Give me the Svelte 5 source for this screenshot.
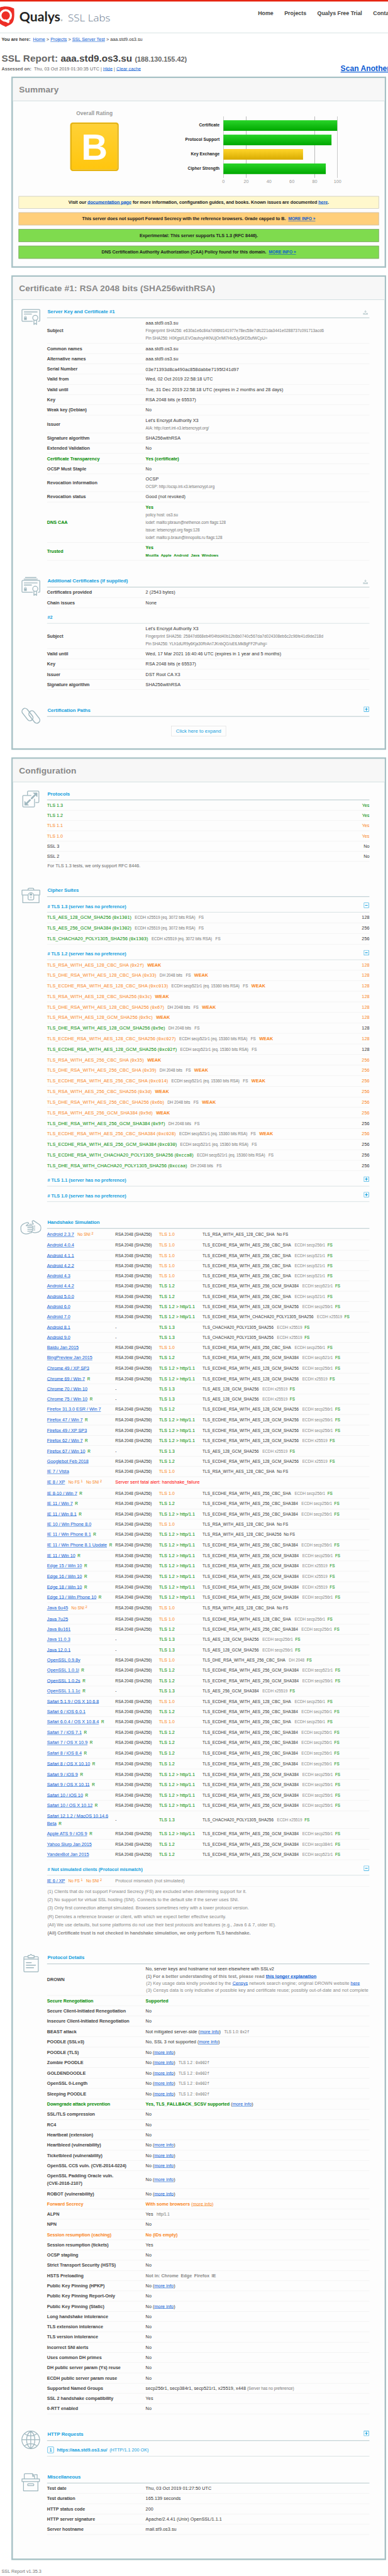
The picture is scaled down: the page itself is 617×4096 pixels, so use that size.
<script>
  const MI = ['more info', 'a'];
  const more = (pre) => [[pre + ' ('], MI, [')']];
  const moreTls = [['No ('], MI, [')'], ['TLS 1.2 : ', 's g'], ['0x002f', 's m']];

  const bars = [
    { label: 'Certificate', value: 100, tone: 'green' },
    { label: 'Protocol Support', value: 95, tone: 'green' },
    { label: 'Key Exchange', value: 70, tone: 'yellow' },
    { label: 'Cipher Strength', value: 90, tone: 'green' }
  ];
  const ticks = [0, 20, 40, 60, 80, 100];

  const cert1 = [
    ['Subject', [[['aaa.std9.os3.su']], [['Fingerprint SHA256: e630a1e6c84a7d96fd141977e78ec58e7dfc221da3441e0288737c091713acd6', 's hash']], [['Pin SHA256: H0Kgsi/LEVOauhcyHKNUjOr/Ml7Hlo5JySKD5ufWCpU=', 's']]]],
    ['Common names', [[['aaa.std9.os3.su']]]],
    ['Alternative names', [[['aaa.std9.os3.su']]]],
    ['Serial Number', [[['03e71393d8ca490ac858dabbe7195f241d97', 'serial']]]],
    ['Valid from', [[['Wed, 02 Oct 2019 22:58:18 UTC']]]],
    ['Valid until', [[['Tue, 31 Dec 2019 22:58:18 UTC (expires in 2 months and 28 days)']]]],
    ['Key', [[['RSA 2048 bits (e 65537)']]]],
    ['Weak key (Debian)', [[['No']]]],
    ['Issuer', [[["Let's Encrypt Authority X3"]], [['AIA: http://cert.int-x3.letsencrypt.org/', 's']]]],
    ['Signature algorithm', [[['SHA256withRSA']]]],
    ['Extended Validation', [[['No']]]],
    ['Certificate Transparency', [[['Yes (certificate)', 'b']]], 'ok'],
    ['OCSP Must Staple', [[['No']]]],
    ['Revocation information', [[['OCSP']], [['OCSP: http://ocsp.int-x3.letsencrypt.org', 's']]]],
    ['Revocation status', [[['Good (not revoked)']]]],
    ['DNS CAA', [[['Yes', 'b']], [['policy host: os3.su', 's']], [['iodef: mailto:pbraun@nethence.com flags:128', 's']], [['issue: letsencrypt.org flags:128', 's']], [['iodef: mailto:p.braun@innopolis.ru flags:128', 's']]], 'ok'],
    ['Trusted', [[['Yes', 'b']], [['Mozilla', 'tb'], ['Apple', 'tb'], ['Android', 'tb'], ['Java', 'tb'], ['Windows', 'tb']]], 'ok']
  ];
  const certExtra = [
    ['Certificates provided', [[['2 (2543 bytes)']]]],
    ['Chain issues', [[['None']]]]
  ];
  const cert2 = [
    ['Subject', [[["Let's Encrypt Authority X3"]], [['Fingerprint SHA256: 25847d668eb4f04fdd40b12b6b0740c567da7d024308eb6c2c96fe41d9de218d', 's hash']], [['Pin SHA256: YLh1dUR9y6Kja30RrAn7JKnbQG/uEtLMkBgFF2Fuihg=', 's']]]],
    ['Valid until', [[['Wed, 17 Mar 2021 16:40:46 UTC (expires in 1 year and 5 months)']]]],
    ['Key', [[['RSA 2048 bits (e 65537)']]]],
    ['Issuer', [[['DST Root CA X3']]]],
    ['Signature algorithm', [[['SHA256withRSA']]]]
  ];

  const protocols = [
    ['TLS 1.3', 'Yes', 'ok'], ['TLS 1.2', 'Yes', 'ok'], ['TLS 1.1', 'Yes', 'warn'],
    ['TLS 1.0', 'Yes', 'warn'], ['SSL 3', 'No', ''], ['SSL 2', 'No', '']
  ];

  const X = 'ECDH x25519 (eq. 3072 bits RSA)';
  const E = 'ECDH secp521r1 (eq. 15360 bits RSA)';
  const D = 'DH 2048 bits';
  const tls13 = [
    ['TLS_AES_128_GCM_SHA256', '0x1301', X, 0, 128],
    ['TLS_AES_256_GCM_SHA384', '0x1302', X, 0, 256],
    ['TLS_CHACHA20_POLY1305_SHA256', '0x1303', X, 0, 256]
  ];
  const tls12 = [
    ['TLS_RSA_WITH_AES_128_CBC_SHA', '0x2f', '', 1, 128],
    ['TLS_DHE_RSA_WITH_AES_128_CBC_SHA', '0x33', D, 1, 128],
    ['TLS_ECDHE_RSA_WITH_AES_128_CBC_SHA', '0xc013', E, 1, 128],
    ['TLS_RSA_WITH_AES_128_CBC_SHA256', '0x3c', '', 1, 128],
    ['TLS_DHE_RSA_WITH_AES_128_CBC_SHA256', '0x67', D, 1, 128],
    ['TLS_RSA_WITH_AES_128_GCM_SHA256', '0x9c', '', 1, 128],
    ['TLS_DHE_RSA_WITH_AES_128_GCM_SHA256', '0x9e', D, 0, 128],
    ['TLS_ECDHE_RSA_WITH_AES_128_CBC_SHA256', '0xc027', E, 1, 128],
    ['TLS_ECDHE_RSA_WITH_AES_128_GCM_SHA256', '0xc02f', E, 0, 128],
    ['TLS_RSA_WITH_AES_256_CBC_SHA', '0x35', '', 1, 256],
    ['TLS_DHE_RSA_WITH_AES_256_CBC_SHA', '0x39', D, 1, 256],
    ['TLS_ECDHE_RSA_WITH_AES_256_CBC_SHA', '0xc014', E, 1, 256],
    ['TLS_RSA_WITH_AES_256_CBC_SHA256', '0x3d', '', 1, 256],
    ['TLS_DHE_RSA_WITH_AES_256_CBC_SHA256', '0x6b', D, 1, 256],
    ['TLS_RSA_WITH_AES_256_GCM_SHA384', '0x9d', '', 1, 256],
    ['TLS_DHE_RSA_WITH_AES_256_GCM_SHA384', '0x9f', D, 0, 256],
    ['TLS_ECDHE_RSA_WITH_AES_256_CBC_SHA384', '0xc028', E, 1, 256],
    ['TLS_ECDHE_RSA_WITH_AES_256_GCM_SHA384', '0xc030', E, 0, 256],
    ['TLS_ECDHE_RSA_WITH_CHACHA20_POLY1305_SHA256', '0xcca8', E, 0, 256],
    ['TLS_DHE_RSA_WITH_CHACHA20_POLY1305_SHA256', '0xccaa', D, 0, 256]
  ];

  // name | flags | protocol | suite | key exchange
  // flags: R = reference browser, N = no SNI, F = no FS, X = handshake failure
  const EC = 'TLS_ECDHE_RSA_WITH_AES_';
  const sims = `Android 2.3.7|N|1.0|TLS_RSA_WITH_AES_128_CBC_SHA|
Android 4.0.4||1.0|@256_CBC_SHA|ECDH secp256r1
Android 4.1.1||1.0|@256_CBC_SHA|ECDH secp521r1
Android 4.2.2||1.0|@256_CBC_SHA|ECDH secp521r1
Android 4.3||1.0|@256_CBC_SHA|ECDH secp521r1
Android 4.4.2||1.2|@256_GCM_SHA384|ECDH secp521r1
Android 5.0.0||1.2|@256_CBC_SHA|ECDH secp521r1
Android 6.0||1.2h|@128_GCM_SHA256|ECDH secp256r1
Android 7.0||1.2h|TLS_ECDHE_RSA_WITH_CHACHA20_POLY1305_SHA256|ECDH x25519
Android 8.1||1.3|TLS_CHACHA20_POLY1305_SHA256|ECDH x25519
Android 9.0||1.3|TLS_CHACHA20_POLY1305_SHA256|ECDH x25519
Baidu Jan 2015||1.0|@256_CBC_SHA|ECDH secp256r1
BingPreview Jan 2015||1.2|@256_GCM_SHA384|ECDH secp521r1
Chrome 49 / XP SP3||1.2h|@128_GCM_SHA256|ECDH secp256r1
Chrome 69 / Win 7|R|1.2h|@128_GCM_SHA256|ECDH x25519
Chrome 70 / Win 10||1.3|TLS_AES_128_GCM_SHA256|ECDH x25519
Chrome 75 / Win 10|R|1.3|TLS_AES_128_GCM_SHA256|ECDH x25519
Firefox 31.3.0 ESR / Win 7||1.2|@128_GCM_SHA256|ECDH secp256r1
Firefox 47 / Win 7|R|1.2h|@128_GCM_SHA256|ECDH secp256r1
Firefox 49 / XP SP3||1.2h|@128_GCM_SHA256|ECDH secp256r1
Firefox 62 / Win 7|R|1.2h|@128_GCM_SHA256|ECDH x25519
Firefox 67 / Win 10|R|1.3|TLS_AES_128_GCM_SHA256|ECDH x25519
Googlebot Feb 2018||1.2|@128_GCM_SHA256|ECDH x25519
IE 7 / Vista||1.0|TLS_RSA_WITH_AES_128_CBC_SHA|
IE 8 / XP|FNX|||
IE 8-10 / Win 7|R|1.0|@256_CBC_SHA|ECDH secp256r1
IE 11 / Win 7|R|1.2|@256_CBC_SHA384|ECDH secp256r1
IE 11 / Win 8.1|R|1.2h|@256_CBC_SHA384|ECDH secp256r1
IE 10 / Win Phone 8.0||1.0|TLS_RSA_WITH_AES_128_CBC_SHA|
IE 11 / Win Phone 8.1|R|1.2h|TLS_RSA_WITH_AES_128_CBC_SHA256|
IE 11 / Win Phone 8.1 Update|R|1.2h|@256_CBC_SHA384|ECDH secp256r1
IE 11 / Win 10|R|1.2h|@256_GCM_SHA384|ECDH secp256r1
Edge 15 / Win 10|R|1.2h|@256_GCM_SHA384|ECDH x25519
Edge 16 / Win 10|R|1.2h|@256_GCM_SHA384|ECDH x25519
Edge 18 / Win 10|R|1.2h|@256_GCM_SHA384|ECDH x25519
Edge 13 / Win Phone 10|R|1.2h|@256_GCM_SHA384|ECDH secp256r1
Java 6u45|N|1.0|TLS_RSA_WITH_AES_128_CBC_SHA|
Java 7u25||1.0|@128_CBC_SHA|ECDH secp256r1
Java 8u161||1.2|@256_CBC_SHA384|ECDH secp256r1
Java 11.0.3||1.3|TLS_AES_128_GCM_SHA256|ECDH secp256r1
Java 12.0.1||1.3|TLS_AES_128_GCM_SHA256|ECDH secp256r1
OpenSSL 0.9.8y||1.0|TLS_DHE_RSA_WITH_AES_256_CBC_SHA|DH 2048
OpenSSL 1.0.1l|R|1.2|@256_GCM_SHA384|ECDH secp521r1
OpenSSL 1.0.2s|R|1.2|@256_GCM_SHA384|ECDH secp256r1
OpenSSL 1.1.1c|R|1.3|TLS_AES_256_GCM_SHA384|ECDH x25519
Safari 5.1.9 / OS X 10.6.8||1.0|@128_CBC_SHA|ECDH secp256r1
Safari 6 / iOS 6.0.1||1.2|@256_CBC_SHA384|ECDH secp256r1
Safari 6.0.4 / OS X 10.8.4|R|1.0|@256_CBC_SHA|ECDH secp256r1
Safari 7 / iOS 7.1|R|1.2|@256_CBC_SHA384|ECDH secp256r1
Safari 7 / OS X 10.9|R|1.2|@256_CBC_SHA384|ECDH secp256r1
Safari 8 / iOS 8.4|R|1.2|@256_CBC_SHA384|ECDH secp256r1
Safari 8 / OS X 10.10|R|1.2|@256_CBC_SHA384|ECDH secp256r1
Safari 9 / iOS 9|R|1.2h|@256_GCM_SHA384|ECDH secp256r1
Safari 9 / OS X 10.11|R|1.2h|@256_GCM_SHA384|ECDH secp256r1
Safari 10 / iOS 10|R|1.2h|@256_GCM_SHA384|ECDH secp256r1
Safari 10 / OS X 10.12|R|1.2h|@256_GCM_SHA384|ECDH secp256r1
Safari 12.1.2 / MacOS 10.14.6 Beta|RL|1.3|TLS_CHACHA20_POLY1305_SHA256|ECDH x25519
Apple ATS 9 / iOS 9|R|1.2h|@256_GCM_SHA384|ECDH secp256r1
Yahoo Slurp Jan 2015||1.2|@256_GCM_SHA384|ECDH secp384r1
YandexBot Jan 2015||1.2|@256_GCM_SHA384|ECDH secp521r1`.split('\n').map((l) => {
    const [name, flags, p, suite, kx] = l.split('|');
    const v = p.slice(0, 3);
    return {
      name, flags, kx,
      proto: 'TLS ' + v + (p.endsWith('h') ? ' > http/1.1' : ''),
      tone: v === '1.0' ? 'warn' : 'ok',
      cert: v === '1.3' ? '-' : 'RSA 2048 (SHA256)',
      suite: suite.replace('@', EC),
      size: flags.includes('L') ? 'double' : flags.includes('N') ? 'sup' : flags.includes('R') ? 'ref' : ''
    };
  });

  const notes = [
    '(1) Clients that do not support Forward Secrecy (FS) are excluded when determining support for it.',
    '(2) No support for virtual SSL hosting (SNI). Connects to the default site if the server uses SNI.',
    '(3) Only first connection attempt simulated. Browsers sometimes retry with a lower protocol version.',
    '(R) Denotes a reference browser or client, with which we expect better effective security.',
    '(All) We use defaults, but some platforms do not use their best protocols and features (e.g., Java 6 & 7, older IE).'
  ];

  const details = [
    ['Secure Renegotiation', [[['Supported', 'b']]], 'ok'],
    ['Secure Client-Initiated Renegotiation', [[['No']]]],
    ['Insecure Client-Initiated Renegotiation', [[['No']]]],
    ['BEAST attack', [[['Not mitigated server-side ('], MI, [')'], ['TLS 1.0: ', 's g'], ['0x2f', 's m']]], 'mono-row'],
    ['POODLE (SSLv3)', [more('No, SSL 3 not supported')]],
    ['POODLE (TLS)', [more('No')]],
    ['Zombie POODLE', [moreTls], 'mono-row'],
    ['GOLDENDOODLE', [moreTls], 'mono-row'],
    ['OpenSSL 0-Length', [moreTls], 'mono-row'],
    ['Sleeping POODLE', [moreTls], 'mono-row'],
    ['Downgrade attack prevention', [[['Yes, TLS_FALLBACK_SCSV supported', 'b'], [' (', 'd'], MI, [')', 'd']]], 'ok'],
    ['SSL/TLS compression', [[['No']]]],
    ['RC4', [[['No']]]],
    ['Heartbeat (extension)', [[['No']]]],
    ['Heartbleed (vulnerability)', [more('No')]],
    ['Ticketbleed (vulnerability)', [more('No')]],
    ['OpenSSL CCS vuln. (CVE-2014-0224)', [more('No')]],
    ['OpenSSL Padding Oracle vuln.\n(CVE-2016-2107)', [more('No')]],
    ['ROBOT (vulnerability)', [more('No')]],
    ['Forward Secrecy', [[['With some browsers', 'b'], [' ('], ['more info', 'a wa'], [')']]], 'warn'],
    ['ALPN', [[['Yes'], ['http/1.1', 's g']]]],
    ['NPN', [[['No']]]],
    ['Session resumption (caching)', [[['No (IDs empty)', 'b']]], 'warn'],
    ['Session resumption (tickets)', [[['Yes']]]],
    ['OCSP stapling', [[['No']]]],
    ['Strict Transport Security (HSTS)', [[['No']]]],
    ['HSTS Preloading', [[['Not in: Chrome', 'gb'], ['Edge', 'gb gap'], ['Firefox', 'gb gap'], ['IE', 'gb gap']]]],
    ['Public Key Pinning (HPKP)', [more('No')]],
    ['Public Key Pinning Report-Only', [[['No']]]],
    ['Public Key Pinning (Static)', [more('No')]],
    ['Long handshake intolerance', [[['No']]]],
    ['TLS extension intolerance', [[['No']]]],
    ['TLS version intolerance', [[['No']]]],
    ['Incorrect SNI alerts', [[['No']]]],
    ['Uses common DH primes', [[['No']]]],
    ['DH public server param (Ys) reuse', [[['No']]]],
    ['ECDH public server param reuse', [[['No']]]],
    ['Supported Named Groups', [[['secp256r1, secp384r1, secp521r1, x25519, x448 '], ['(Server has no preference)', 's']]], 'mono-row'],
    ['SSL 2 handshake compatibility', [[['Yes']]]],
    ['0-RTT enabled', [[['No']]]]
  ];
  const misc = [
    ['Test date', [[['Thu, 03 Oct 2019 01:27:50 UTC']]]],
    ['Test duration', [[['165.139 seconds']]]],
    ['HTTP status code', [[['200']]]],
    ['HTTP server signature', [[['Apache/2.4.41 (Unix) OpenSSL/1.1.1']]]],
    ['Server hostname', [[['mail.st9.os3.su']]]]
  ];
</script>

{#snippet fields(rows)}
  {#each rows as [label, lines, tone = '']}
    <div class="row kv {tone}" class:open={label === 'Serial Number'}>
      <div class="label">{label}</div>
      <div class="value">
        {#each lines as line}<div class="line">{#each line as [text, cls = '']}<span class={cls}>{text}</span>{/each}</div>{/each}
      </div>
    </div>
  {/each}
{/snippet}

{#snippet toggle(open)}
  <svg class="toggle" width="14" height="14" viewBox="0 0 14 14" fill="none" stroke="#12a0de">
    <rect x=".6" y=".6" width="12.8" height="12.8" stroke-width="1.2" />
    <path d={open ? 'M3.5 7h7' : 'M3.5 7h7M7 3v8'} stroke-width="1.8" />
  </svg>
{/snippet}

{#snippet download()}
  <svg class="download" width="13" height="12" viewBox="0 0 13 12" fill="#c3d2d5">
    <path d="M5.4 0h2.2v3.4h2.6L6.500 7 2.800 3.400h2.600z" /><path d="M0 7.500h3.800L6.500 9.300l2.700-1.800H13V12H0z" />
  </svg>
{/snippet}

{#snippet head(title, kind)}
  <div class="head">
    <h3>{title}</h3>
    {#if kind === 'download'}{@render download()}{:else if kind === 'plus'}{@render toggle(false)}{/if}
  </div>
{/snippet}

{#snippet sub(title, kind)}
  <div class="sub">
    <h4>{title}</h4>
    {#if kind}{@render toggle(kind === 'minus')}{/if}
  </div>
{/snippet}

{#snippet suites(rows)}
  {#each rows as [name, code, kx, weak, bits]}
    <div class="row suite">
      <div class={weak ? 'warn' : 'ok'}><span class="cs">{name}</span> (<span class="mono">{code}</span>){#if kx}<span class="s g">{kx}</span><span class="s g">FS</span>{/if}{#if weak}<b class="g">WEAK</b>{/if}</div>
      <div class={weak ? 'warn' : ''}>{bits}</div>
    </div>
  {/each}
{/snippet}

{#snippet icon(name)}
  <svg class="icon" width="56" height="50" viewBox="0 0 56 50" fill="none" stroke="#9fb7bf" stroke-width="2.1" stroke-linecap="round" stroke-linejoin="round">
    {#if name === 'cert' || name === 'certs'}
      {#if name === 'certs'}<path d="M14 1.700h28M10.500 6h35" stroke-width="2.400" />{/if}
      <g transform={name === 'certs' ? 'translate(0 4.500)' : 'translate(0 0)'}>
        <path d="M33 36H7a2 2 0 0 1-2-2V7a2 2 0 0 1 2-2h43a2 2 0 0 1 2 2v27a2 2 0 0 1-2 2h-2" />
        <path d="M11 11.500h34M11 17h19" stroke-width="2.300" />
        <circle cx="40" cy="27" r="6.700" />
        <path d="M36.500 33.500V44.500l3.500-3 3.500 3V33.500" />
        <rect x="10.500" y="26" width="7" height="6.500" fill="#9fb7bf" stroke="none" />
        <path d="M12 26v-1.500a2 2 0 0 1 4 0V26" stroke-width="1.500" />
      </g>
    {:else if name === 'chain'}
      <rect x="11.500" y="3.500" width="16" height="37" rx="8" transform="rotate(-38 19.500 22)" stroke-width="2.500" />
      <rect x="29.500" y="10" width="16" height="37" rx="8" transform="rotate(-38 37.500 28.500)" stroke-width="2.500" />
    {:else if name === 'protocols'}
      <path d="M19.500 14V6a2 2 0 0 1 2-2h26a2 2 0 0 1 2 2v26a2 2 0 0 1-2 2H41" />
      <path d="M29 15.500H9a2 2 0 0 0-2 2v26a2 2 0 0 0 2 2h27a2 2 0 0 0 2-2V25" />
      <path d="M30.500 23l8-8M26 27.500l-8 8" stroke-width="4.500" />
      <path d="M35 8.500h10v10zM12 31v10h10z" fill="#9fb7bf" stroke-width="1" />
    {:else if name === 'case'}
      <path d="M21 9V7.500A2.500 2.500 0 0 1 23.500 5h10A2.500 2.500 0 0 1 36 7.500V9M20 23H6a1 1 0 0 1-1-1V11a1 1 0 0 1 1-1h45a1 1 0 0 1 1 1v11a1 1 0 0 1-1 1H36" />
      <path d="M7 24v19h43V24" />
      <path d="M21 24v8.500a3 3 0 0 0 3 3h9a3 3 0 0 0 3-3V24a7.500 7.500 0 0 0-15 0z" />
      <path d="M25 24v-2a3.500 3.500 0 0 1 7 0v2z" fill="#9fb7bf" stroke="none" />
      <path d="M28.500 27.500v3" stroke-width="2" />
    {:else if name === 'hands'}
      <path d="M26 38.500c-3 3-7 3-11 3C7 41 2 36 2 29V23C4 17 12 13 19 11.500c4-.5 4 2 2 4l-5 4h15c3 1 3 4 0 4.500h-11M31 24c4 1 4 4 0 5h-11M31 29c3 1 3 5-1 5h-10M30 34c3 2 0 5-4 4.500" />
      <path d="M25 16l10-.5-3-5c-1-4 3-5 6-2.500l12 8c3 2 5 6 5 10 0 7-5 11-13 12-4 .5-6 0-9-1M39 21h-3.500M39 26h-3.500M39 31h-3.500" />
    {:else if name === 'clipboard'}
      <path d="M20 8.500h-8a2 2 0 0 0-2 2V46a2 2 0 0 0 2 2h34a2 2 0 0 0 2-2V10.500a2 2 0 0 0-2-2H37M10 14.500h37" />
      <path d="M21 11V5h4l3.500-3L32 5h5v6z" />
      <path d="M16.500 24h13M16.500 30.500h24M16.500 37h19" stroke-width="2.500" />
    {:else if name === 'globe'}
      <circle cx="28" cy="25" r="23.400" />
      <path d="M28 2v46M4.500 25h47M12 9c9 7.500 23 7.500 32 0M12 41c9-7.500 23-7.500 32 0M28 2c-14.500 10-14.500 36 0 46M28 2c14.500 10 14.500 36 0 46" />
    {:else}
      <path d="M5 16h46v7H5zM9 24v23.500h38V24M11 15V4.500a2 2 0 0 1 2-2h20l5 6.500v6M33 3v6h5M38 5h7v10" />
      <rect x="20" y="29" width="16" height="5" rx="1.500" />
    {/if}
  </svg>
{/snippet}

<div class="frame">
  <div class="page">
    <header>
      <svg class="logo" width="300" height="83" viewBox="0 0 300 83">
        <path d="M15 17c8 0 15 2 22 5.500 1 16 1.500 31-5 38.500-5 5-12 7-17 10-5-3-12-5-17-10-6.500-7.500-6-22.500-5-38.500C0 19 7 17 15 17z" fill="#ed2e26" />
        <ellipse cx="15" cy="41" rx="13.800" ry="14" fill="none" stroke="#fff" stroke-width="5.500" />
        <path d="M13 50c4 2 8 5 13 6l-3 5c-5-1-9-4-12-8z" fill="#fff" />
        <text x="51" y="56" font-family="Lato" font-weight="700" font-size="34" fill="#242424" textLength="108" lengthAdjust="spacingAndGlyphs">Qualys</text>
        <text x="160" y="56" font-family="Lato" font-size="6" fill="#242424">®</text>
        <text x="179" y="56" font-family="Open Sans" font-weight="300" font-size="25.500" fill="#66788e" textLength="112" lengthAdjust="spacingAndGlyphs">SSL Labs</text>
      </svg>
      <nav><span>Home</span><span>Projects</span><span>Qualys Free Trial</span><span>Contact</span></nav>
    </header>

    <div class="crumbs"><b>You are here:&nbsp;</b> <span class="a">Home</span> &gt; <span class="a">Projects</span> &gt; <span class="a">SSL Server Test</span> &gt; aaa.std9.os3.su</div>
    <h1><span class="lead">SSL Report:</span> <span class="host">aaa.std9.os3.su</span> <span class="ip">(188.130.155.42)</span></h1>
    <div class="assessed">
      <div><b>Assessed on:&nbsp;</b> Thu, 03 Oct 2019 01:30:35 UTC | <span class="a">Hide</span> | <span class="a">Clear cache</span></div>
      <div class="scan">Scan Another »</div>
    </div>

    <section class="panel">
      <h2>Summary</h2>
      <div class="summary">
        <div class="rating">
          <div class="cap">Overall Rating</div>
          <div class="grade">B</div>
        </div>
        <div class="names">{#each bars as bar}<div>{bar.label}</div>{/each}</div>
        <div class="chart">
          {#each bars as bar}<div class="bar {bar.tone}" style:width="{bar.value * 3}px"></div>{/each}
          <div class="ticks">{#each ticks as t}<span>{t}</span>{/each}</div>
        </div>
      </div>
      <div class="notices">
        <div class="notice info">Visit our <span class="a">documentation page</span> for more information, configuration guides, and books. Known issues are documented <span class="a">here</span>.</div>
        <div class="notice caution">This server does not support Forward Secrecy with the reference browsers. Grade capped to B.&nbsp; <span class="a mi">MORE INFO »</span></div>
        <div class="notice good">Experimental: This server supports TLS 1.3 (RFC 8446).</div>
        <div class="notice good">DNS Certification Authority Authorization (CAA) Policy found for this domain.&nbsp; <span class="a mi">MORE INFO »</span></div>
      </div>
    </section>

    <section class="panel">
      <h2>Certificate #1: RSA 2048 bits (SHA256withRSA)</h2>
      <div class="block">
        {@render icon('cert')}
        <div>{@render head('Server Key and Certificate #1', 'download')}{@render fields(cert1)}</div>
      </div>
      <div class="block">
        {@render icon('certs')}
        <div>
          {@render head('Additional Certificates (if supplied)', 'download')}
          {@render fields(certExtra)}
          {@render sub('#2', '')}
          {@render fields(cert2)}
        </div>
      </div>
      <div class="block">
        {@render icon('chain')}
        <div>{@render head('Certification Paths', 'plus')}<div class="expand">Click here to expand</div></div>
      </div>
    </section>

    <section class="panel">
      <h2>Configuration</h2>
      <div class="block">
        {@render icon('protocols')}
        <div>
          {@render head('Protocols', '')}
          {#each protocols as [name, value, tone]}
            <div class="row ends {tone}"><div>{name}</div><div>{value}</div></div>
          {/each}
          <div class="note dark">For TLS 1.3 tests, we only support RFC 8446.</div>
        </div>
      </div>
      <div class="block">
        {@render icon('case')}
        <div>
          {@render head('Cipher Suites', '')}
          {@render sub('# TLS 1.3 (server has no preference)', 'minus')}
          {@render suites(tls13)}
          {@render sub('# TLS 1.2 (server has no preference)', 'minus')}
          {@render suites(tls12)}
          {@render sub('# TLS 1.1 (server has no preference)', 'plus')}
          {@render sub('# TLS 1.0 (server has no preference)', 'plus')}
        </div>
      </div>
      <div class="block">
        {@render icon('hands')}
        <div>
          {@render head('Handshake Simulation', '')}
          {#each sims as s}
            <div class="row sim {s.size}">
              <div class="client"><span class="a">{s.name}</span>{#if s.flags.includes('F')}<span class="tag">No FS <sup>1</sup></span>{/if}{#if s.flags.includes('N')}<span class="tag">No SNI <sup>2</sup></span>{/if}{#if s.flags.includes('R')}<span class="r">R</span>{/if}</div>
              {#if s.flags.includes('X')}
                <div class="fail">Server sent fatal alert: handshake_failure</div>
              {:else}
                <div class="sm">{s.cert}</div>
                <div class="pr {s.tone}">{s.proto}</div>
                <div class="sm"><span class="css">{s.suite}</span>{#if s.kx}<span class="kx">{s.kx}</span><span class="fs">FS</span>{:else}<span class="nofs">No FS</span>{/if}</div>
              {/if}
            </div>
          {/each}
          {@render sub('# Not simulated clients (Protocol mismatch)', 'minus')}
          <div class="row sim sup">
            <div class="client"><span class="a">IE 6 / XP</span><span class="tag">No FS <sup>1</sup></span><span class="tag">No SNI <sup>2</sup></span></div>
            <div class="mismatch">Protocol mismatch (not simulated)</div>
          </div>
          <div class="notes">
            {#each notes as n}<div class="note">{n}</div>{/each}
            <div class="note"><b>(All) Certificate trust is not checked in handshake simulation, we only perform TLS handshake.</b></div>
          </div>
        </div>
      </div>
      <div class="block">
        {@render icon('clipboard')}
        <div>
          {@render head('Protocol Details', '')}
          <div class="row kv">
            <div class="label">DROWN</div>
            <div class="value drown">
              <div class="line">No, server keys and hostname not seen elsewhere with SSLv2</div>
              <p><b>(1) For a better understanding of this test, please read <span class="a">this longer explanation</span></b></p>
              <p>(2) Key usage data kindly provided by the <span class="a">Censys</span> network search engine; original DROWN website <span class="a">here</span></p>
              <p>(3) Censys data is only indicative of possible key and certificate reuse; possibly out-of-date and not complete</p>
            </div>
          </div>
          {@render fields(details)}
        </div>
      </div>
      <div class="block">
        {@render icon('globe')}
        <div>
          {@render head('HTTP Requests', 'plus')}
          <div class="request"><span class="num">1</span><b>https://aaa.std9.os3.su/</b><span>(HTTP/1.1 200 OK)</span></div>
        </div>
      </div>
      <div class="block last">
        {@render icon('box')}
        <div>{@render head('Miscellaneous', '')}{@render fields(misc)}</div>
      </div>
    </section>

    <footer>SSL Report v1.35.3</footer>
  </div>
</div>

<style>
  :global(body) { margin: 0; background: #fff; }
  .frame { width: 617px; height: 4096px; overflow: hidden; }
  .page {
    width: 1023px; height: 6792px; overflow: hidden; background: #fff;
    transform: scale(0.60313, 0.60306); transform-origin: 0 0;
    font: 12px/20px "Liberation Sans", Arial, sans-serif; color: #333;
  }
  .page * { box-sizing: border-box; }
  h1, h2, h3, h4, p { margin: 0; }
  .a { color: #0a5bd3; text-decoration: underline; }
  .ok { color: #008a00; }
  .warn { color: #f98419; }

  header { display: flex; height: 87px; border-top: 4px solid #e62310; border-bottom: 1px solid #bdd0d3; }
  .logo { flex: none; margin-top: -4px; }
  nav { display: flex; gap: 29px; margin: 21px 0 0 380px; font-size: 14.67px; font-weight: bold; color: #444; white-space: nowrap; }
  .crumbs { margin: 7px 0 0 4px; height: 20px; line-height: 20px; letter-spacing: .03px; }
  h1 { height: 30px; margin: 25px 0 0 4px; font-size: 25.33px; line-height: 30px; color: #666; white-space: nowrap; }
  .lead { letter-spacing: .26px; }
  .host { color: #444; }
  .ip { font-size: 18px; }
  .assessed { display: flex; justify-content: space-between; height: 20px; margin: 2px -40px 0 4px; color: #666; line-height: 20px; letter-spacing: .06px; }
  .scan { width: 165px; flex: none; color: #0a5bd3; font-size: 20px; font-weight: bold; text-decoration: underline; white-space: nowrap; }

  .panel { width: 988px; margin: 0 0 20px 30px; border: 4px solid #a7c1c5; background: #fdfdfd; }
  .assessed + .panel { margin-top: 11px; }
  h2 { height: 61px; padding: 0 16px; border-bottom: 1px solid #bdd0d3; background: #f7f7f7; color: #888; font-size: 22.67px; line-height: 60px; letter-spacing: .24px; }

  .summary { display: grid; grid-template-columns: 446px 99px 1fr; height: 250px; }
  .rating { padding: 22px 0 0 151px; width: 280px; text-align: center; }
  .cap { width: 128px; color: #999; font-size: 14px; font-weight: bold; line-height: 20px; letter-spacing: .08px; }
  .grade { width: 128px; height: 128px; margin-top: 14px; border: 4px solid #e6b412; border-radius: 7px; background: linear-gradient(#ffd136, #ffc60e); color: #fff; font-size: 96px; font-weight: bold; line-height: 121px; }
  .names { padding-top: 50px; text-align: right; font-size: 11px; font-weight: bold; color: #222; white-space: nowrap; letter-spacing: .05px; }
  .names div { height: 38px; line-height: 26px; }
  .chart { width: 301px; height: 162px; margin: 40px 0 0 10px; padding-top: 10px; background: repeating-linear-gradient(90deg, #bbb 0 1px, transparent 1px 60px); }
  .bar { height: 28px; margin-bottom: 10px; }
  .green { background: linear-gradient(#28d428, #00a800); }
  .yellow { background: linear-gradient(#ffd52a, #d8ab00); }
  .ticks { display: flex; justify-content: space-between; margin: 0 -20px; color: #999; }
  .ticks span { width: 40px; text-align: center; }
  .notices { display: flex; flex-direction: column; gap: 10px; padding: 0 15px 20px; }
  .notice { height: 34px; border: 1px solid #bbb; font-weight: bold; line-height: 32px; text-align: center; color: #222; white-space: nowrap; letter-spacing: -.085px; }
  .info { height: 33px; background: #fff8cd; line-height: 31px; }
  .caution { background: #ffcf7b; }
  .good { border-color: #7d8f76; background: #7fdb4e; }
  .mi { font-size: 11px; letter-spacing: 0; }

  .block { display: grid; grid-template-columns: 90px 850px; margin-top: 37px; }
  h2 + .block { margin-top: 14px; }
  .block.last { padding-bottom: 63px; }
  .icon { margin: 6px 0 0 19px; }
  .head { display: flex; justify-content: space-between; height: 34px; padding: 7px 1px 0; border-bottom: 2px solid #c3d2d5; }
  h3 { color: #12a0de; font-size: 13px; line-height: 20px; letter-spacing: -.08px; }
  .sub { display: flex; justify-content: space-between; height: 41px; padding: 15px 1px 0; border-bottom: 1px solid #c3d2d5; }
  h4 { color: #12a0de; font-size: 12px; line-height: 20px; letter-spacing: .03px; }
  .download { margin: 6px 3px 0 0; }

  .row { border-bottom: 1px solid #eee; }
  .kv { display: grid; grid-template-columns: 260px 1fr; align-items: center; padding: 3px 0; }
  .kv.mono-row { height: 27.5px; }
  .label { font-weight: bold; color: #444; padding-right: 30px; white-space: pre-line; letter-spacing: -.06px; }
  .ok .label, .warn .label { color: inherit; }
  .value, .line { white-space: nowrap; }
  .value { letter-spacing: .09px; }
  .line { height: 20px; }
  .s, .sm { font-size: 10.5px; line-height: 12px; }
  .s { color: #777; letter-spacing: -.07px; }
  .hash { letter-spacing: .083px; }
  .g { margin-left: 9px; }
  .m, .mono { font-family: "DejaVu Sans Mono", monospace; line-height: 12px; letter-spacing: 0; }
  .m { font-size: 10px; }
  .mono { font-size: 11.7px; }
  .b { font-weight: bold; letter-spacing: -.04px; }
  .d { color: #333; }
  .wa { color: inherit; }
  .tb { margin-right: 6px; font-size: 10px; font-weight: bold; }
  .gb { color: #888; font-weight: bold; letter-spacing: 0; }
  .gap { margin-left: 6px; }
  .serial { position: relative; top: 1px; letter-spacing: .29px; }
  .kv.open { border-bottom: 0; padding-bottom: 4px; background: linear-gradient(#eee, #eee) 0 100% / 260px 1px no-repeat; }

  .ends, .suite { display: flex; justify-content: space-between; align-items: center; height: 27px; }
  .suite { height: 27.85px; white-space: nowrap; }
  .cs { letter-spacing: .155px; }

  .sim { display: grid; grid-template-columns: 180px 115px 115px 1fr; align-items: center; height: 27px; white-space: nowrap; }
  .sim.ref { height: 27.5px; }
  .sim.sup { height: 29.9px; }
  .sim.double { height: 47.5px; }
  .double .client { white-space: normal; padding-right: 10px; }
  .client sup { font-size: 9px; line-height: 0; vertical-align: 4px; }
  .tag { margin-left: 9px; color: #f98419; font-size: 10.5px; }
  .r { margin-left: 6px; color: #008a00; font-size: 10.5px; }
  .pr { letter-spacing: -.05px; }
  .css { letter-spacing: .176px; }
  .fail { color: #f00; grid-column: 2 / -1; letter-spacing: .088px; }
  .mismatch { color: #888; grid-column: 2 / -1; letter-spacing: .05px; }
  .kx { margin-left: 9px; color: #888; letter-spacing: -.07px; }
  .fs { margin-left: 6px; color: #008a00; }
  .nofs { margin-left: 6px; }

  .notes { padding-top: 2px; }
  .note { height: 22px; padding-left: 1px; color: #888; line-height: 22px; letter-spacing: .03px; }
  .note b { letter-spacing: -.047px; }
  .dark { color: #666; }
  .drown { padding-bottom: 2px; }
  .drown p { padding-left: 1px; color: #888; line-height: 18px; }
  .expand { width: 145px; height: 27px; margin: 24px 0 32px 327px; border: 1px solid #ddd; color: #12a0de; font-size: 13px; line-height: 25px; text-align: center; letter-spacing: .04px; }
  .request { display: flex; height: 41px; padding: 13px 1px 0; border-bottom: 1px solid #c3d2d5; color: #12a0de; }
  .request b { margin: 0 6px 0 8px; }
  .num { width: 17px; height: 17px; margin-top: 2px; border: 1px solid #12a0de; border-radius: 2px; line-height: 15px; text-align: center; font-weight: bold; }
  footer { height: 20px; margin: 5px 0 0 4px; color: #777; letter-spacing: .05px; }
</style>
